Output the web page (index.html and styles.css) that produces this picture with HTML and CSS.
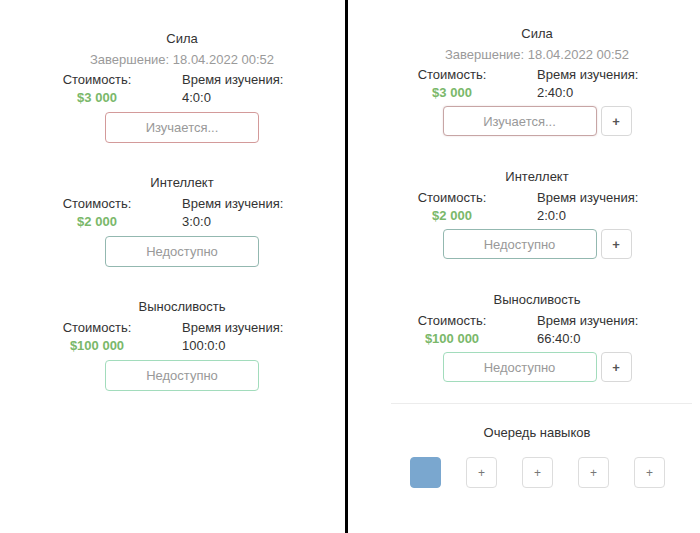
FILE: index.html
```html
<!DOCTYPE html>
<html lang="ru">
<head>
<meta charset="utf-8">
<title>Навыки</title>
<link rel="stylesheet" href="styles.css">
</head>
<body>
<div class="screen">
  <section class="panel panel-left">
    <div class="skill">
      <div class="skill-title">Сила</div>
      <div class="skill-finish">Завершение: 18.04.2022 00:52</div>
      <div class="stats">
        <div class="stat-cost">Стоимость:</div>
        <div class="stat-time">Время изучения:</div>
        <div class="stat-cost price">$3 000</div>
        <div class="stat-time">4:0:0</div>
      </div>
      <div class="actions">
        <button class="btn btn-learning">Изучается...</button>
      </div>
    </div>
    <div class="skill">
      <div class="skill-title">Интеллект</div>
      <div class="stats">
        <div class="stat-cost">Стоимость:</div>
        <div class="stat-time">Время изучения:</div>
        <div class="stat-cost price">$2 000</div>
        <div class="stat-time">3:0:0</div>
      </div>
      <div class="actions">
        <button class="btn btn-teal">Недоступно</button>
      </div>
    </div>
    <div class="skill">
      <div class="skill-title">Выносливость</div>
      <div class="stats">
        <div class="stat-cost">Стоимость:</div>
        <div class="stat-time">Время изучения:</div>
        <div class="stat-cost price">$100 000</div>
        <div class="stat-time">100:0:0</div>
      </div>
      <div class="actions">
        <button class="btn btn-green">Недоступно</button>
      </div>
    </div>
  </section>
  <div class="divider"></div>
  <section class="panel panel-right">
    <div class="skill">
      <div class="skill-title">Сила</div>
      <div class="skill-finish">Завершение: 18.04.2022 00:52</div>
      <div class="stats">
        <div class="stat-cost">Стоимость:</div>
        <div class="stat-time">Время изучения:</div>
        <div class="stat-cost price">$3 000</div>
        <div class="stat-time">2:40:0</div>
      </div>
      <div class="actions">
        <button class="btn btn-learning soft">Изучается...</button>
        <button class="btn-plus">+</button>
      </div>
    </div>
    <div class="skill">
      <div class="skill-title">Интеллект</div>
      <div class="stats">
        <div class="stat-cost">Стоимость:</div>
        <div class="stat-time">Время изучения:</div>
        <div class="stat-cost price">$2 000</div>
        <div class="stat-time">2:0:0</div>
      </div>
      <div class="actions">
        <button class="btn btn-teal">Недоступно</button>
        <button class="btn-plus">+</button>
      </div>
    </div>
    <div class="skill">
      <div class="skill-title">Выносливость</div>
      <div class="stats">
        <div class="stat-cost">Стоимость:</div>
        <div class="stat-time">Время изучения:</div>
        <div class="stat-cost price">$100 000</div>
        <div class="stat-time">66:40:0</div>
      </div>
      <div class="actions">
        <button class="btn btn-green">Недоступно</button>
        <button class="btn-plus">+</button>
      </div>
    </div>
    <hr class="sep">
    <div class="queue-title">Очередь навыков</div>
    <div class="queue">
      <div class="slot slot-filled"></div>
      <div class="slot">+</div>
      <div class="slot">+</div>
      <div class="slot">+</div>
      <div class="slot">+</div>
    </div>
  </section>
</div>
</body>
</html>
```
FILE: styles.css
```css
html, body {
  margin: 0;
  padding: 0;
  background: #ffffff;
}
body {
  font-family: "Liberation Sans", Arial, sans-serif;
  font-size: 13px;
  color: #333333;
  width: 700px;
  height: 533px;
  overflow: hidden;
}
.screen {
  display: flex;
  width: 700px;
  height: 533px;
}
.panel {
  box-sizing: border-box;
  display: flex;
  flex-direction: column;
  align-items: center;
  min-width: 0;
}
.panel-left {
  width: 345px;
  flex: none;
  padding-left: 19px;
  padding-top: 29px;
}
.divider {
  width: 3px;
  background: #000000;
  flex: none;
}
.panel-right {
  flex: 1 1 0;
  padding-left: 26px;
  padding-top: 24px;
}
.skill {
  display: flex;
  flex-direction: column;
  align-items: center;
  margin-bottom: 30px;
}
.panel-right .skill {
  margin-bottom: 31px;
}
.skill-title {
  line-height: 20px;
  margin-bottom: 2px;
  color: #333;
}
.skill-finish {
  line-height: 18px;
  margin-bottom: 2px;
  color: #9a9a9a;
}
.stats {
  display: grid;
  grid-template-columns: 170px 170px;
  line-height: 18px;
}
.stat-cost {
  text-align: center;
}
.stat-time {
  text-align: left;
}
.price {
  color: #7ab86a;
  font-weight: bold;
}
.actions {
  display: flex;
  gap: 4px;
  margin-top: 5px;
}
.panel-right .actions {
  margin-top: 4px;
}
.btn {
  box-sizing: border-box;
  width: 154px;
  height: 31px;
  background: #ffffff;
  border: 1.5px solid #cccccc;
  border-radius: 4px;
  font-family: inherit;
  font-size: 13px;
  color: #999999;
  padding: 0;
}
.panel-right .btn {
  height: 30px;
}
.btn-learning {
  border-color: #d39a9a;
}
.btn-learning.soft {
  border-color: #c7a5a5;
  box-shadow: 0 0 2px rgba(150, 100, 100, 0.25);
}
.btn-teal {
  border-color: #93b8b0;
}
.btn-green {
  border-color: #a2dcbc;
}
.btn-plus {
  box-sizing: border-box;
  width: 31px;
  height: 30px;
  background: #ffffff;
  border: 1px solid #d8d8d8;
  border-radius: 4px;
  font-family: inherit;
  font-size: 13px;
  font-weight: bold;
  color: #555555;
  padding: 0;
}
.sep {
  align-self: stretch;
  border: 0;
  border-top: 1px solid #ececec;
  margin: -10px 8px 0 17px;
  height: 0;
}
.queue-title {
  margin-top: 19px;
  line-height: 20px;
  color: #333;
}
.queue {
  display: flex;
  gap: 25px;
  margin-top: 14px;
  margin-left: 1px;
}
.slot {
  box-sizing: border-box;
  width: 31px;
  height: 31px;
  border: 1px solid #dddddd;
  border-radius: 4px;
  display: flex;
  align-items: center;
  justify-content: center;
  color: #777777;
  font-size: 12px;
}
.slot-filled {
  background: #7aa7cf;
  border-color: #7aa7cf;
}
```
